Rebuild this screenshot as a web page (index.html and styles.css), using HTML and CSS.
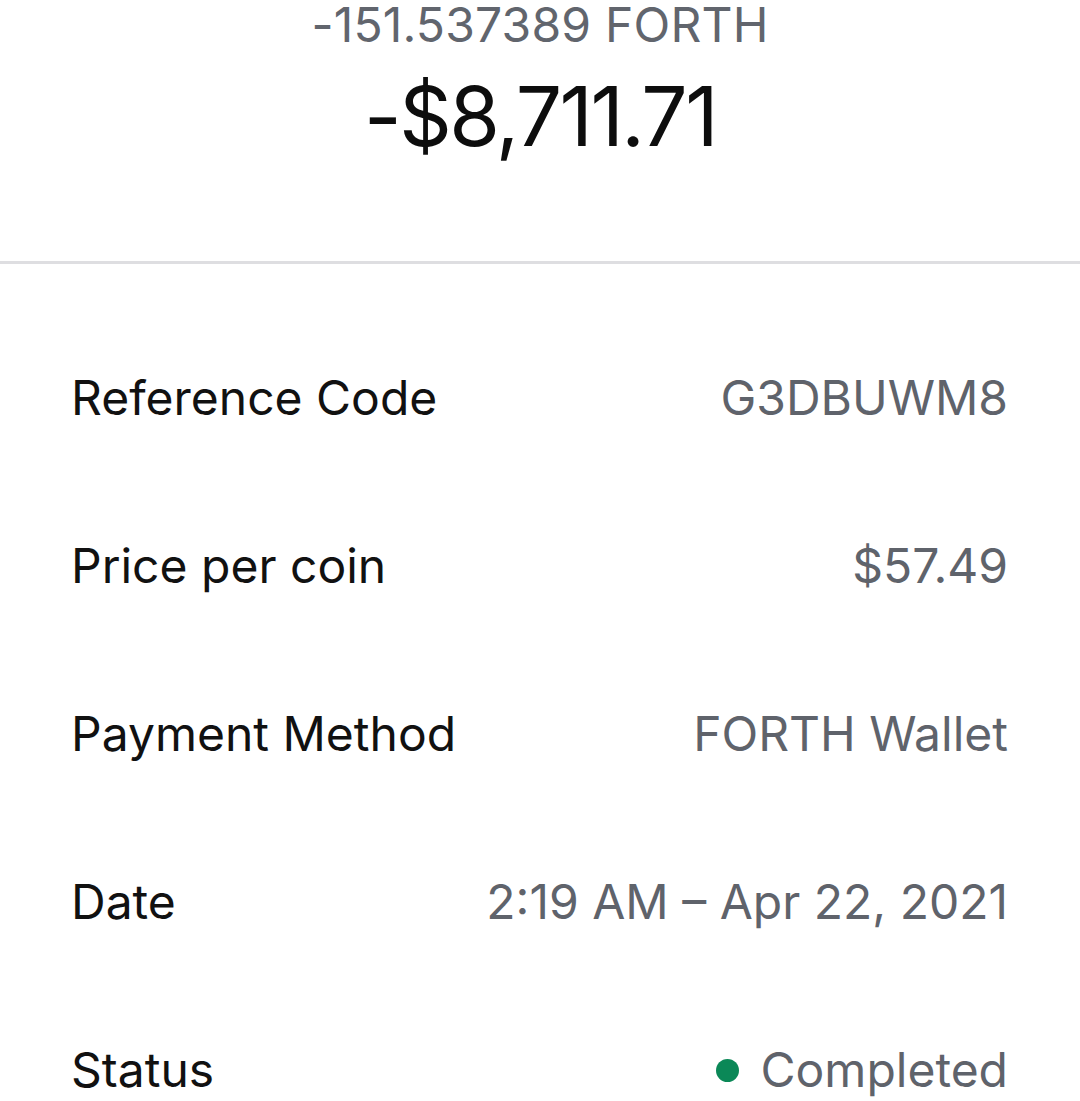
FILE: index.html
```html
<!DOCTYPE html>
<html>
<head>
<meta charset="utf-8">
<link rel="stylesheet" href="styles.css">
</head>
<body>
<div class="page">
  <header class="summary">
    <div class="crypto-amount">-151.537389 FORTH</div>
    <div class="fiat-amount">-$8,711.71</div>
  </header>
  <div class="divider"></div>
  <section class="details">
    <div class="row"><span class="label">Reference Code</span><span class="value">G3DBUWM8</span></div>
    <div class="row"><span class="label">Price per coin</span><span class="value">$57.49</span></div>
    <div class="row"><span class="label">Payment Method</span><span class="value">FORTH Wallet</span></div>
    <div class="row"><span class="label">Date</span><span class="value">2:19 AM – Apr 22, 2021</span></div>
    <div class="row"><span class="label">Status</span><span class="value status"><span class="dot"></span>Completed</span></div>
  </section>
</div>
</body>
</html>
```
FILE: styles.css
```css
html, body {
  margin: 0;
  padding: 0;
  background: #ffffff;
}
.page {
  width: 1080px;
  height: 1101px;
  overflow: hidden;
  font-family: Inter, "Noto Sans", sans-serif;
}
.summary {
  height: 261px;
  box-sizing: border-box;
  text-align: center;
}
.crypto-amount {
  font-size: 48px;
  line-height: 50px;
  color: #61656d;
  letter-spacing: 0.2px;
}
.fiat-amount {
  margin-top: 22px;
  font-size: 82px;
  line-height: 90px;
  color: #0d0d0d;
  letter-spacing: -2.5px;
}
.divider {
  height: 3px;
  background: #dedee1;
}
.details {
  padding: 50px 72px 0 71px;
}
.row {
  height: 168px;
  display: flex;
  align-items: center;
  justify-content: space-between;
  font-size: 48px;
  line-height: 168px;
}
.label {
  color: #111111;
}
.value {
  color: #5f636b;
}
.status {
  display: flex;
  align-items: center;
}
.dot {
  width: 23px;
  height: 23px;
  border-radius: 50%;
  background: #0b8857;
  margin-right: 22px;
}
```
